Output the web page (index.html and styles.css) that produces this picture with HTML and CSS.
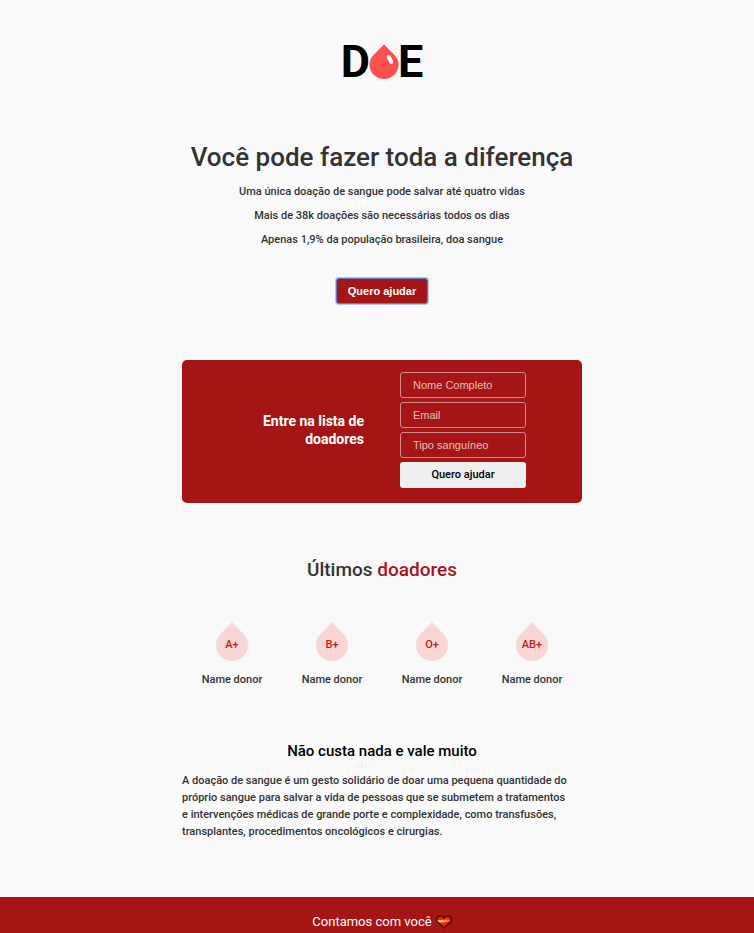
FILE: index.html
```html
<!DOCTYPE html>
<html lang="pt-BR">
<head>
<meta charset="utf-8">
<meta name="viewport" content="width=device-width, initial-scale=1">
<title>Doe</title>
<link rel="stylesheet" href="styles.css">
</head>
<body>
<div class="content">
  <header class="header">
    <div class="logo">
      <span>D</span>
      <svg class="logo-drop" viewBox="0 0 30 36" aria-hidden="true">
        <path d="M15 0.5 L25.5 11 C28.2 13.7 29.6 17 29.6 20.5 A14.6 14.6 0 0 1 0.4 20.5 C0.4 17 1.8 13.7 4.5 11 Z" fill="#ff5050"/>
        <ellipse cx="21" cy="15.5" rx="2.1" ry="4.8" transform="rotate(-27 21 15.5)" fill="#fff"/>
      </svg>
      <span>E</span>
    </div>
    <h1 class="title">Você pode fazer toda a diferença</h1>
    <p class="fact">Uma única doação de sangue pode salvar até quatro vidas</p>
    <p class="fact">Mais de 38k doações são necessárias todos os dias</p>
    <p class="fact">Apenas 1,9% da população brasileira, doa sangue</p>
    <button class="help" type="button">Quero ajudar</button>
  </header>

  <section class="signup">
    <h2 class="signup-title">Entre na lista de doadores</h2>
    <form class="form">
      <input class="field" type="text" name="name" placeholder="Nome Completo" aria-label="Nome Completo">
      <input class="field" type="email" name="email" placeholder="Email" aria-label="Email">
      <input class="field" type="text" name="blood" placeholder="Tipo sanguíneo" aria-label="Tipo sanguíneo">
      <button class="submit" type="button">Quero ajudar</button>
    </form>
  </section>

  <section class="donors">
    <h2 class="donors-title">Últimos <span class="accent">doadores</span></h2>
    <div class="donor-list">
      <div class="donor"><div class="blood">A+</div><p class="donor-name">Name donor</p></div>
      <div class="donor"><div class="blood">B+</div><p class="donor-name">Name donor</p></div>
      <div class="donor"><div class="blood">O+</div><p class="donor-name">Name donor</p></div>
      <div class="donor"><div class="blood">AB+</div><p class="donor-name">Name donor</p></div>
    </div>
  </section>

  <section class="about">
    <h2 class="about-title">Não custa nada e vale muito</h2>
    <p class="about-text">A doação de sangue é um gesto solidário de doar uma pequena quantidade do próprio sangue para salvar a vida de pessoas que se submetem a tratamentos e intervenções médicas de grande porte e complexidade, como transfusões, transplantes, procedimentos oncológicos e cirurgias.</p>
  </section>
</div>
<footer class="footer">
  <span>Contamos com você</span>
  <svg class="heart" viewBox="0 0 16 14" aria-hidden="true">
    <defs><linearGradient id="band" x1="0" x2="1"><stop offset="0" stop-color="#ffd21c"/><stop offset=".55" stop-color="#ffb01c"/><stop offset="1" stop-color="#f03a17"/></linearGradient>
    <clipPath id="shape"><path d="M8 13 L1.8 7.2 C-.6 4.2 1.4 1 4.3 1 C6 1 7.4 2 8 3.2 C8.6 2 10 1 11.7 1 C14.6 1 16.6 4.2 14.2 7.2 Z"/></clipPath></defs>
    <g clip-path="url(#shape)"><rect width="16" height="14" fill="#ef1c24"/><path d="M0 5 H7 L9 4.4 L15 5 V7 H9 L7 7.6 H0 Z" fill="url(#band)"/></g>
    <path d="M8 13 L1.8 7.2 C-.6 4.2 1.4 1 4.3 1 C6 1 7.4 2 8 3.2 C8.6 2 10 1 11.7 1 C14.6 1 16.6 4.2 14.2 7.2 Z" fill="none" stroke="#2b0808" stroke-width="1.2"/>
  </svg>
</footer>
</body>
</html>
```
FILE: styles.css
```css
* {
  box-sizing: border-box;
  margin: 0;
}

body {
  background: #f9f9f9;
  color: #333;
  font: 500 11px/17px Roboto, sans-serif;
}

.content {
  max-width: 410px;
  margin: 0 auto;
  padding-left: 10px;
  box-sizing: content-box;
  max-width: 400px;
}

.header {
  display: flex;
  flex-direction: column;
  align-items: center;
  padding-top: 36px;
}

.logo {
  display: flex;
  align-items: center;
  height: 52px;
  margin-bottom: 52px;
  color: #000;
  font-size: 45px;
  font-weight: 700;
  line-height: 54px;
}

.logo-drop {
  width: 30px;
  height: 36px;
  margin: 0 -1px;
}

.title {
  margin-bottom: 9px;
  font-size: 26px;
  font-weight: 500;
  line-height: 34px;
}

.fact {
  margin-bottom: 7px;
}

.help,
.submit,
.field {
  border: 1px solid transparent;
  border-radius: 3px;
  font: 500 11px/14px Roboto, sans-serif;
}

.help {
  width: 92px;
  height: 26px;
  margin-top: 23px;
  border-color: #5a7fd0;
  box-shadow: 0 0 0 1px #a9c8f5;
  background: #a51515;
  color: #fff;
  font-family: "Liberation Sans", Arial, sans-serif;
  font-weight: 700;
}

.signup {
  display: grid;
  grid-template-columns: 182px 126px;
  column-gap: 36px;
  align-items: center;
  margin-top: 56px;
  padding: 12px 0 15px;
  border-radius: 5px;
  background: #a51515;
}

.signup-title {
  padding-left: 70px;
  color: #fff;
  font-size: 14px;
  font-weight: 700;
  line-height: 18px;
  text-align: right;
}

.form {
  display: grid;
  gap: 4px;
}

.field,
.submit {
  width: 100%;
  height: 26px;
}

.field {
  padding: 0 12px;
  border-color: #d28a8a;
  background: transparent;
  color: #fff;
  font-family: "Liberation Sans", Arial, sans-serif;
  font-weight: 400;
}

.field::placeholder {
  color: #fff;
  opacity: 0.7;
}

.submit {
  background: #efefef;
  color: #000;
}

.donors-title {
  margin-top: 55px;
  font-size: 19px;
  font-weight: 500;
  line-height: 24px;
  text-align: center;
}

.accent {
  color: #a51515;
}

.donor-list {
  display: grid;
  grid-template-columns: repeat(4, 1fr);
  margin-top: 47px;
}

.donor {
  display: grid;
  justify-items: center;
}

.blood {
  position: relative;
  z-index: 0;
  width: 32px;
  height: 32px;
  color: #b81c1c;
  line-height: 32px;
  text-align: center;
}

.blood::before {
  content: "";
  position: absolute;
  inset: 0;
  z-index: -1;
  border-radius: 0 50% 50%;
  background: #f9d6d6;
  transform: rotate(45deg);
}

.donor-name {
  margin-top: 10px;
}

.about {
  margin-top: 53px;
}

.about-title {
  margin-bottom: 11px;
  color: #000;
  font-size: 15px;
  font-weight: 500;
  line-height: 20px;
  text-align: center;
}

.about-text {
  padding-right: 10px;
}

.footer {
  display: flex;
  justify-content: center;
  align-items: center;
  gap: 4px;
  margin-top: 57px;
  padding: 16px 0 4px 10px;
  background: #a51515;
  color: #fff;
  font-size: 13px;
  font-weight: 400;
}

.heart {
  width: 16px;
  height: 14px;
}
```
